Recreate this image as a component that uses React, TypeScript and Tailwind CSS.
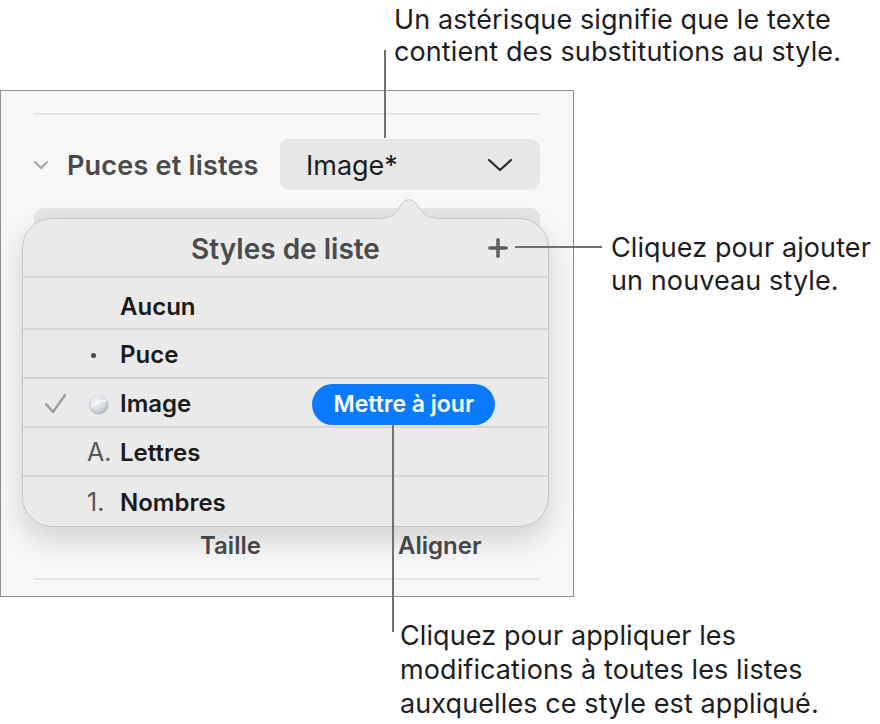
import { Plus } from 'lucide-react';

const rows = [
  { label: 'Aucun', marker: null as null | string, checked: false },
  { label: 'Puce', marker: 'dot', checked: false },
  { label: 'Image', marker: 'image', checked: true },
  { label: 'Lettres', marker: 'A.', checked: false },
  { label: 'Nombres', marker: '1.', checked: false },
];

function Marker({ kind }: { kind: string | null }) {
  if (!kind) return null;
  if (kind === 'dot') {
    return <span className="ml-[4px] block h-[5px] w-[5px] rounded-full bg-[#4a4a4a]" />;
  }
  if (kind === 'image') {
    return (
      <svg width="21" height="21" viewBox="0 0 21 21" className="ml-[1px]">
        <defs>
          <radialGradient id="disc" cx="40%" cy="35%" r="70%">
            <stop offset="0%" stopColor="#f4f5f8" />
            <stop offset="60%" stopColor="#d6d9e2" />
            <stop offset="100%" stopColor="#a9aebb" />
          </radialGradient>
        </defs>
        <circle cx="10.5" cy="10.5" r="10" fill="url(#disc)" />
        <path d="M3 13 C 8 9, 13 7, 19 6" stroke="#ffffff" strokeWidth="1.6" fill="none" opacity="0.8" />
      </svg>
    );
  }
  return <span className="text-[25px] font-normal text-[#555555]">{kind}</span>;
}

function Callout({ className }: { className: string }) {
  return <div className={`absolute bg-[#707070] ${className}`} />;
}

export default function App() {
  return (
    <div
      className="relative h-[724px] w-[880px] overflow-hidden bg-white text-[#1d1d1f]"
      style={{ fontFamily: 'Inter, "Noto Sans", "Liberation Sans", sans-serif' }}
    >
      {/* sidebar panel */}
      <div className="relative mt-[90px] h-[507px] w-[574px] border border-[#8f8f8f] bg-[#f7f7f7] px-[33px] pt-[22px]">
        <div className="h-[2px] bg-[#e4e4e4]" />

        <div className="mt-[24px] flex items-center">
          <svg width="16" height="10" viewBox="0 0 16 10" className="mr-[18px] ml-[-1px]">
            <path d="M2 2 L8 8 L14 2" stroke="#a4a4a4" strokeWidth="2" fill="none" strokeLinecap="round" />
          </svg>
          <span className="pt-[3px] text-[27px] font-semibold tracking-[0.2px] text-[#4a4a4a]">Puces et listes</span>
          <div className="ml-auto flex h-[51px] w-[260px] items-center justify-between rounded-[9px] bg-[#e7e7e7] pl-[26px] pr-[27px]">
            <span className="pt-[4px] text-[27px] text-[#1d1d1d]">Image*</span>
            <svg width="26" height="16" viewBox="0 0 26 16">
              <path d="M2 3 L13 13 L24 3" stroke="#2a2a2a" strokeWidth="2.2" fill="none" strokeLinecap="round" strokeLinejoin="round" />
            </svg>
          </div>
        </div>

        <div className="mt-[18px] h-[60px] rounded-[9px] bg-[#e6e6e6]" />
        <div className="h-[260px]" />

        <div className="grid grid-cols-2 text-[24px] font-semibold text-[#4a4a4a]">
          <span className="pl-[166px]">Taille</span>
          <span className="pl-[111px]">Aligner</span>
        </div>

        <div className="mt-[14px] h-[2px] bg-[#e4e4e4]" />

        {/* popover */}
        <div className="absolute left-[21px] top-[127px] w-[527px] rounded-[30px] border border-[#c6c6c6] bg-[#eaeaea] shadow-[0_12px_30px_rgba(0,0,0,0.16)]">
          <svg width="56" height="27" viewBox="0 0 56 27" className="absolute left-[358px] top-[-24px]">
            <path d="M0 23 C 10 23, 14 20, 20 10 C 24 3, 32 3, 36 10 C 42 20, 46 23, 56 23 L56 27 L0 27 Z" fill="#eaeaea" />
            <path d="M0 23 C 10 23, 14 20, 20 10 C 24 3, 32 3, 36 10 C 42 20, 46 23, 56 23" fill="none" stroke="#c6c6c6" strokeWidth="1" />
          </svg>

          <div className="relative flex h-[59px] items-center justify-center border-b-2 border-[#d6d6d6]">
            <span className="pt-[2px] text-[28px] font-semibold text-[#4b4b4b]">Styles de liste</span>
            <Plus className="absolute right-[36px] h-[28px] w-[28px] text-[#5e5e5e]" strokeWidth={3} />
          </div>

          {rows.map((row, i) => (
            <div
              key={row.label}
              className={`flex items-center pt-[3px] ${i === 0 ? 'h-[52px] pt-[7px]' : 'h-[49px]'} ${
                i < rows.length - 1 ? 'border-b-2 border-[#d6d6d6]' : ''
              }`}
            >
              <div className="flex w-[64px] justify-center pl-[2px]">
                {row.checked && (
                  <svg width="24" height="22" viewBox="0 0 24 22">
                    <path d="M2 11 L9 19 L21 2" stroke="#9d9d9d" strokeWidth="2.4" fill="none" strokeLinecap="round" strokeLinejoin="round" />
                  </svg>
                )}
              </div>
              <div className="flex w-[33px] items-center">
                <Marker kind={row.marker} />
              </div>
              <span className="text-[24px] font-semibold text-[#1a1a1a]">{row.label}</span>
              {row.checked && (
                <span className="ml-[121px] flex h-[41px] w-[183px] items-center justify-center rounded-full bg-[#0a7aff] text-[23px] font-semibold text-white">
                  Mettre à jour
                </span>
              )}
            </div>
          ))}
        </div>
      </div>

      {/* callouts */}
      <Callout className="left-[384px] top-[50px] h-[88px] w-[2px]" />
      <Callout className="left-[515px] top-[246px] h-[2px] w-[87px]" />
      <Callout className="left-[392px] top-[424px] h-[208px] w-[2px]" />

      <div className="absolute left-[394px] top-[4px] text-[27px] leading-[32px] tracking-[0.1px]">
        Un astérisque signifie que le texte
        <br />
        contient des substitutions au style.
      </div>
      <div className="absolute left-[611px] top-[231px] text-[27px] leading-[33px] tracking-[0.1px]">
        Cliquez pour ajouter
        <br />
        un nouveau style.
      </div>
      <div className="absolute left-[400px] top-[619px] text-[27px] leading-[34px] tracking-[0.1px]">
        Cliquez pour appliquer les
        <br />
        modifications à toutes les listes
        <br />
        auxquelles ce style est appliqué.
      </div>
    </div>
  );
}
